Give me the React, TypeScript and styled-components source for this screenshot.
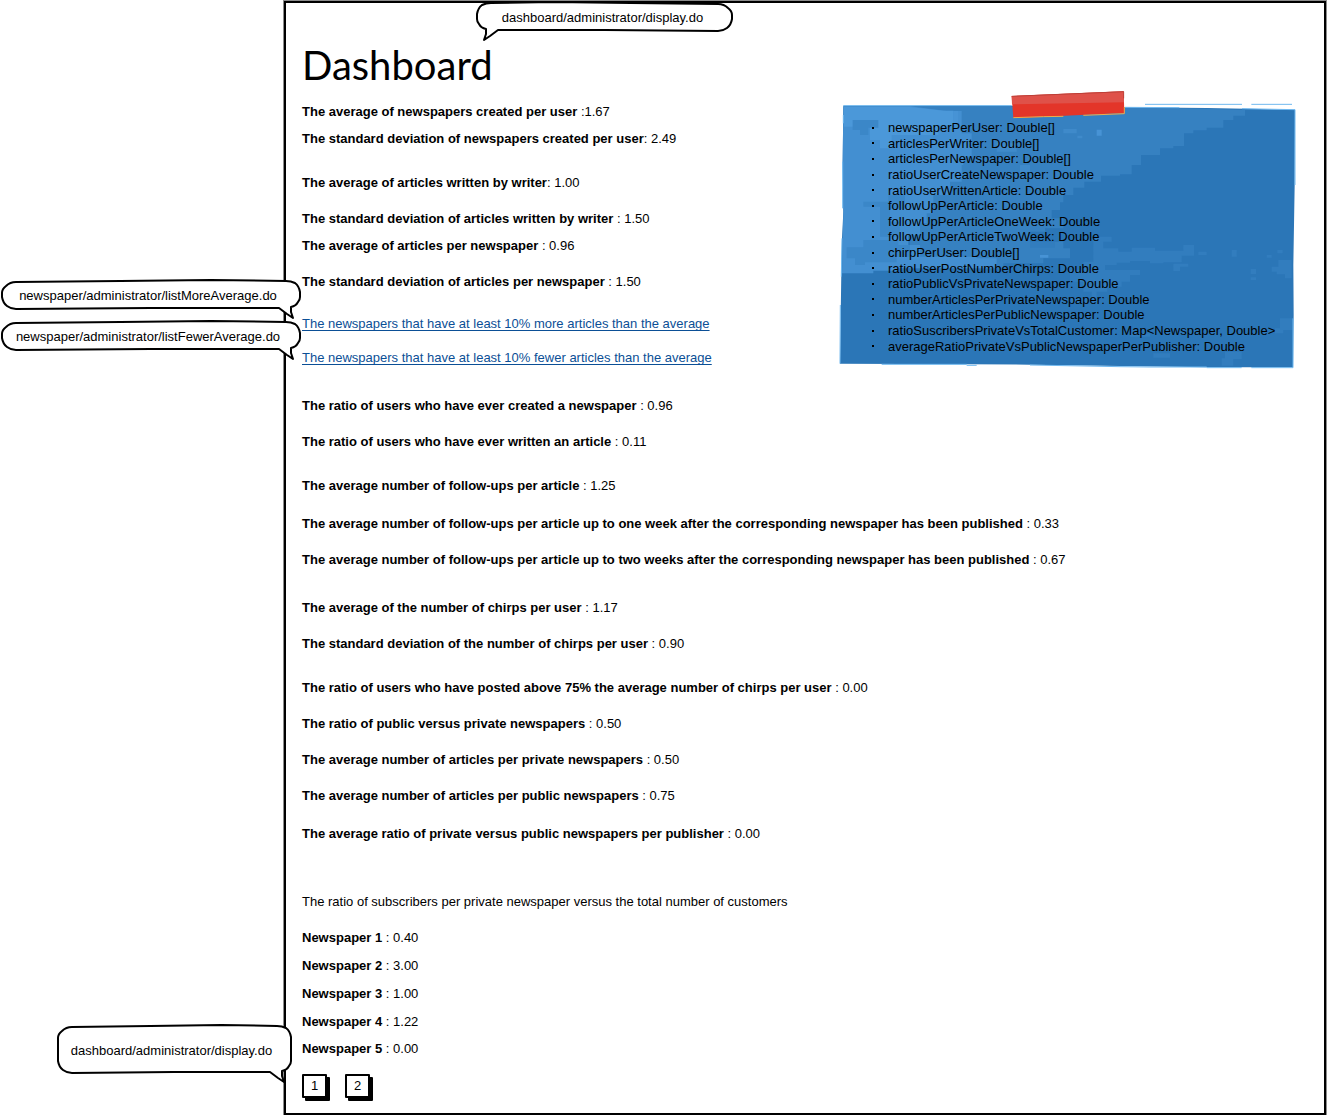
import React from "react";
import styled, { createGlobalStyle } from "styled-components";

const GlobalStyle = createGlobalStyle`
  *, *::before, *::after {
    box-sizing: border-box;
  }
  body {
    margin: 0;
    background: #ffffff;
    color: #000000;
    font-family: "Liberation Sans", Arial, sans-serif;
    font-size: 13px;
    line-height: 16px;
  }
`;

const Page = styled.div`
  position: relative;
  padding: 1px 1px 1px 284px;
`;

const Frame = styled.main`
  display: flow-root;
  padding: 38px 29px 15px 16px;
  border: 2px solid #000000;
  box-shadow: 0 0 0 1px #8c8c8c;
`;

const Title = styled.h1`
  margin: 0 0 15px;
  font-family: Lato, "Liberation Sans", sans-serif;
  font-size: 40px;
  font-weight: 400;
  line-height: 48px;
`;

const Metric = styled.p<{ $gap: number }>`
  margin: 0 0 ${({ $gap }) => $gap}px;
`;

const ReportLink = styled.a`
  color: #0b4f96;
  text-decoration: underline;
  text-decoration-thickness: 1px;
  text-decoration-skip-ink: none;
  text-underline-offset: 2px;
`;

const Pagination = styled.nav`
  display: flex;
  gap: 18px;
  padding-top: 17px;
`;

const PageButton = styled.button`
  min-width: 25px;
  height: 24px;
  padding: 0;
  border: 2px solid #000000;
  border-radius: 1px;
  background: #ffffff;
  box-shadow: 3px 3px 0 #000000;
  color: #000000;
  font: inherit;
  cursor: pointer;
`;

const Note = styled.aside`
  position: relative;
  float: right;
  width: 455px;
  padding: 16px 0 14px 48px;
`;

const NotePaper = styled.svg`
  position: absolute;
  top: -19px;
  left: -10px;
  width: 475px;
  height: 290px;
`;

const NoteList = styled.ul`
  position: relative;
  display: grid;
  grid-auto-rows: 1fr;
  height: 234px;
  margin: 0;
  padding: 0;
  list-style: none;
`;

const NoteItem = styled.li`
  display: flex;
  align-items: center;
  line-height: 15px;
  white-space: nowrap;

  &::before {
    content: "";
    width: 2px;
    height: 2px;
    margin: 0 14px 0 -16px;
    background: #000000;
  }
`;

const Callout = styled.div<{ $left: number; $top: number; $width: number; $height: number }>`
  position: absolute;
  top: ${({ $top }) => $top}px;
  left: ${({ $left }) => $left}px;
  display: flex;
  align-items: center;
  justify-content: center;
  width: ${({ $width }) => $width}px;
  height: ${({ $height }) => $height}px;
  padding: 2px 5px 0 0;
  white-space: nowrap;
`;

const CalloutShape = styled.svg`
  position: absolute;
  inset: 0;
  overflow: visible;
`;

const CalloutText = styled.span`
  position: relative;
`;

type MetricData = { label: string; value: string; gap: number };

const articleMetrics: MetricData[] = [
  { label: "The average of newspapers created per user", value: " :1.67", gap: 11 },
  { label: "The standard deviation of newspapers created per user", value: ": 2.49", gap: 28 },
  { label: "The average of articles written by writer", value: ": 1.00", gap: 20 },
  { label: "The standard deviation of articles written by writer", value: " : 1.50", gap: 11 },
  { label: "The average of articles per newspaper", value: " : 0.96", gap: 20 },
  { label: "The standard deviation of articles per newspaper", value: " : 1.50", gap: 26 },
];

const userMetrics: MetricData[] = [
  { label: "The ratio of users who have ever created a newspaper", value: " : 0.96", gap: 20 },
  { label: "The ratio of users who have ever written an article", value: " : 0.11", gap: 28 },
  { label: "The average number of follow-ups per article", value: " : 1.25", gap: 22 },
  {
    label:
      "The average number of follow-ups per article up to one week after the corresponding newspaper has been published",
    value: " : 0.33",
    gap: 20,
  },
  {
    label:
      "The average number of follow-ups per article up to two weeks after the corresponding newspaper has been published",
    value: " : 0.67",
    gap: 32,
  },
  { label: "The average of the number of chirps per user", value: " : 1.17", gap: 20 },
  { label: "The standard deviation of the number of chirps per user", value: " : 0.90", gap: 28 },
  {
    label: "The ratio of users who have posted above 75% the average number of chirps per user",
    value: " : 0.00",
    gap: 20,
  },
  { label: "The ratio of public versus private newspapers", value: " : 0.50", gap: 20 },
  { label: "The average number of articles per private newspapers", value: " : 0.50", gap: 20 },
  { label: "The average number of articles per public newspapers", value: " : 0.75", gap: 22 },
  { label: "The average ratio of private versus public newspapers per publisher", value: " : 0.00", gap: 52 },
];

const newspaperMetrics: MetricData[] = [
  { label: "Newspaper 1", value: " : 0.40", gap: 12 },
  { label: "Newspaper 2", value: " : 3.00", gap: 12 },
  { label: "Newspaper 3", value: " : 1.00", gap: 12 },
  { label: "Newspaper 4", value: " : 1.22", gap: 11 },
  { label: "Newspaper 5", value: " : 0.00", gap: 0 },
];

const noteFields = [
  "newspaperPerUser: Double[]",
  "articlesPerWriter: Double[]",
  "articlesPerNewspaper: Double[]",
  "ratioUserCreateNewspaper: Double",
  "ratioUserWrittenArticle: Double",
  "followUpPerArticle: Double",
  "followUpPerArticleOneWeek: Double",
  "followUpPerArticleTwoWeek: Double",
  "chirpPerUser: Double[]",
  "ratioUserPostNumberChirps: Double",
  "ratioPublicVsPrivateNewspaper: Double",
  "numberArticlesPerPrivateNewspaper: Double",
  "numberArticlesPerPublicNewspaper: Double",
  "ratioSuscribersPrivateVsTotalCustomer: Map<Newspaper, Double>",
  "averageRatioPrivateVsPublicNewspaperPerPublisher: Double",
];

function MetricList({ items }: { items: MetricData[] }) {
  return (
    <>
      {items.map(({ label, value, gap }) => (
        <Metric key={label} $gap={gap}>
          <strong>{label}</strong>
          {value}
        </Metric>
      ))}
    </>
  );
}

function StickyNote() {
  return (
    <Note>
      <NotePaper viewBox="0 0 1425 870" aria-hidden="true">
        <path
          d="M40 62H545L885 67 1130 69 1395 74 1394 300 1390 540 1391 690 1389 847H1130L870 843 600 839 410 838 30 836 34 560 36 460 40 380 38 230Z"
          fill="#2b76b7"
        />
        <path
          d="M240 65H545L885 67 1130 71 1245 75V92H1210V105H1180V128H1130V136H1090V145H1062V183H1030V190H990V210H933V240H905V268H870V272H813V290H763V308H730V330H700V352H690V375H665V400H700V430H645V440H600V470H700V490H720V520H640V535H520V550H240V300Z"
          fill="#3681c1"
        />
        <path
          d="M40 64H240L350 78H395V145H425V215H400V240H395V290H360V330H310V385H290V415H270V450H235V480H270V515H440V520H500V550H205V557H130V565H36L38 460 40 380 38 230Z"
          fill="#438fd1"
        />
        <path d="M42 66H240L340 77H370V120H325V150H185V190H150V165H120V105H70V125H42Z" fill="#4b98d9" />
        <path d="M68 105H145V128H115V150H90V135H68ZM100 350H175V330H225V372H180V410H210V455H150V365H100ZM50 487H100V465H205V480H240V515H200V532H105V540H75V520H50Z" fill="#3b87c8" />
        <path d="M370 78H384V115H370ZM630 510H655V518H630ZM800 134H815V152H800Z" fill="#4793d5" />
        <path d="M700 132H740V145H700ZM742 152H757V160H742ZM500 175H560V200H500ZM570 240H600V262H570Z" fill="#3f8aca" />
        <path
          d="M600 470H675V488H600ZM790 455H845V470H820V490H865V500H905V488H975V497H1060V480H1092V512H1055V532H1000V535H960V528H900V533H860V540H825V555H930V570H900V590H875V605H832V620H800V650H785V620H760V590H720V555H760V530H790ZM1105 500H1130V510H1105ZM1205 495H1220V515H1205ZM1310 510H1325V518H1310ZM1342 495H1358V505H1342ZM1345 525H1385V580H1365V568H1340V560H1325V545H1345ZM1262 552H1278V567H1262ZM1262 577H1278V585H1262ZM1030 536H1075V545H1050V558H1030ZM1350 700H1388V735H1360V745H1335V730H1350ZM1185 800H1235V822H1210V842H1175V820H1185ZM970 805H1020V818H970ZM720 640H770V655H720ZM900 745H960V755H900Z"
          fill="#327dbe"
        />
        <path
          d="M40 62H545M885 67L1048 68M1236 71L1395 74V300M40 90V115M38 230V370M36 460L34 575M31 660L30 836M155 838H410M410 841H440M600 840L870 845 960 846H1130M1130 848H1235M1264 848H1389V700M945 58H1236M1264 58H1386"
          fill="none"
          stroke="#6fb8ef"
          strokeWidth="3"
        />
        <path d="M545 33L881 19 883 84 550 99Z" fill="#e33529" />
        <path d="M545 33L881 19 882 52 546 58Z" fill="#df5149" />
        <path d="M545 34L881 20V40" fill="none" stroke="#a9372f" strokeWidth="2" />
        <path d="M550 98L640 95 700 94M760 91L883 86V66" fill="none" stroke="#efac4c" strokeWidth="3" />
      </NotePaper>
      <NoteList>
        {noteFields.map((field) => (
          <NoteItem key={field}>{field}</NoteItem>
        ))}
      </NoteList>
    </Note>
  );
}

type BubbleProps = {
  left: number;
  top: number;
  width: number;
  height: number;
  tail: "left" | "right";
  children: string;
};

/* Hand-drawn speech bubble; the outline is drawn with the tail on the right and mirrored for the left. */
function Bubble({ left, top, width: w, height: h, tail, children }: BubbleProps) {
  const outline = `M16 2 Q10 2 6 6 Q2 9 2 13 V${h - 13} Q3 ${h - 7} 7 ${h - 4} Q11 ${h - 1} 16 ${h - 1} L${w / 2} ${h - 2} L${w - 22} ${h - 2} L${w - 14} ${h + 4} L${w - 8} ${h + 8} L${w - 10} ${h + 2} L${w - 10} ${h - 3} Q${w - 5} ${h - 4} ${w - 3} ${h - 8} Q${w - 1} ${h - 10} ${w - 1} ${h - 13} V12 Q${w - 2} 6 ${w - 6} 3 Q${w - 10} 1 ${w - 15} 1 L${w * 0.7} 0 L${w * 0.4} 1 Z`;
  return (
    <Callout $left={left} $top={top} $width={w} $height={h}>
      <CalloutShape width={w} height={h} aria-hidden="true">
        <path
          d={outline}
          transform={tail === "left" ? `matrix(-1 0 0 1 ${w} 0)` : undefined}
          fill="#ffffff"
          stroke="#000000"
          strokeWidth="2"
          strokeLinejoin="round"
        />
      </CalloutShape>
      <CalloutText>{children}</CalloutText>
    </Callout>
  );
}

export default function App() {
  return (
    <>
      <GlobalStyle />
      <Page>
        <Frame>
          <Title>Dashboard</Title>
          <StickyNote />
          <MetricList items={articleMetrics} />
          <Metric $gap={18}>
            <ReportLink href="#more">
              The newspapers that have at least 10% more articles than the average
            </ReportLink>
          </Metric>
          <Metric $gap={32}>
            <ReportLink href="#fewer">
              The newspapers that have at least 10% fewer articles than the average
            </ReportLink>
          </Metric>
          <MetricList items={userMetrics} />
          <Metric $gap={20}>
            The ratio of subscribers per private newspaper versus the total number of customers
          </Metric>
          <MetricList items={newspaperMetrics} />
          <Pagination aria-label="Pages">
            <PageButton type="button">1</PageButton>
            <PageButton type="button">2</PageButton>
          </Pagination>
        </Frame>
        <Bubble left={476} top={2} width={258} height={30} tail="left">
          dashboard/administrator/display.do
        </Bubble>
        <Bubble left={0} top={280} width={301} height={30} tail="right">
          newspaper/administrator/listMoreAverage.do
        </Bubble>
        <Bubble left={0} top={321} width={301} height={30} tail="right">
          newspaper/administrator/listFewerAverage.do
        </Bubble>
        <Bubble left={56} top={1025} width={236} height={49} tail="right">
          dashboard/administrator/display.do
        </Bubble>
      </Page>
    </>
  );
}
